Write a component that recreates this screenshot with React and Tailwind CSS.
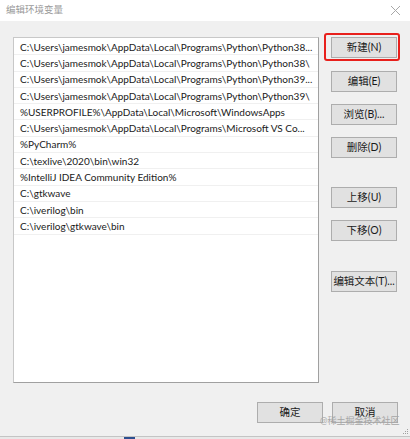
import React from "react";

const paths = [
  "C:\\Users\\jamesmok\\AppData\\Local\\Programs\\Python\\Python38...",
  "C:\\Users\\jamesmok\\AppData\\Local\\Programs\\Python\\Python38\\",
  "C:\\Users\\jamesmok\\AppData\\Local\\Programs\\Python\\Python39...",
  "C:\\Users\\jamesmok\\AppData\\Local\\Programs\\Python\\Python39\\",
  "%USERPROFILE%\\AppData\\Local\\Microsoft\\WindowsApps",
  "C:\\Users\\jamesmok\\AppData\\Local\\Programs\\Microsoft VS Co...",
  "%PyCharm%",
  "C:\\texlive\\2020\\bin\\win32",
  "%IntelliJ IDEA Community Edition%",
  "C:\\gtkwave",
  "C:\\iverilog\\bin",
  "C:\\iverilog\\gtkwave\\bin",
];

function Btn({ children, className = "" }) {
  return (
    <div
      className={`flex h-[21px] w-[66px] items-center justify-center border border-[#adadad] bg-[#e1e1e1] text-[10.5px] whitespace-nowrap text-[#1a1a1a] ${className}`}
    >
      {children}
    </div>
  );
}

export default function App() {
  return (
    <div
      className="relative flex h-[439px] w-[410px] flex-col overflow-hidden bg-[#f0f0f0]"
      style={{ fontFamily: 'Lato, "Noto Sans CJK SC", sans-serif' }}
    >
      {/* title bar */}
      <div className="flex h-[21px] shrink-0 items-center justify-between bg-white pl-[6px] pr-[9px]">
        <span className="text-[9.5px] text-[#9a9a9a]">编辑环境变量</span>
        <svg width="11" height="11" viewBox="0 0 11 11" className="text-[#a8a8a8]">
          <path d="M1 1L10 10M10 1L1 10" stroke="currentColor" strokeWidth="1" />
        </svg>
      </div>

      <div className="flex flex-1 flex-col">
        <div className="flex">
          {/* list */}
          <div className="ml-[13px] mt-[16px] h-[346px] w-[306px] border border-[#a0a0a0] border-l-[#c8c8c8] border-t-[#c8c8c8] bg-white pt-[1px]">
            {paths.map((p) => (
              <div
                key={p}
                className="flex h-[16.3px] items-center overflow-hidden border-b border-[#f0f0f0] pl-[6px] text-[10px] leading-none whitespace-nowrap text-[#1a1a1a]"
              >
                {p}
              </div>
            ))}
          </div>

          {/* buttons */}
          <div className="ml-[12px] mt-[16px] flex flex-col">
            <div className="relative">
              <div className="pointer-events-none absolute -top-[4px] -left-[7px] h-[28px] w-[76px] rounded-[3px] border-2 border-[#e8201c]" />
              <Btn>新建(N)</Btn>
            </div>
            <Btn className="mt-[13px]">编辑(E)</Btn>
            <Btn className="mt-[12px]">浏览(B)...</Btn>
            <Btn className="mt-[12px]">删除(D)</Btn>
            <Btn className="mt-[29px]">上移(U)</Btn>
            <Btn className="mt-[12px]">下移(O)</Btn>
            <Btn className="mt-[30px]">编辑文本(T)...</Btn>
          </div>
        </div>

        {/* bottom buttons */}
        <div className="mt-[19px] flex justify-end gap-[9px] pr-[12px]">
          <Btn>确定</Btn>
          <Btn>取消</Btn>
        </div>
      </div>

      {/* watermark */}
      <div className="pointer-events-none absolute top-[415px] left-[320px] text-[9px] leading-[12px] text-[#a6a6a6]">
        @稀土掘金技术社区
      </div>

      {/* resize grip */}
      <svg width="7" height="7" viewBox="0 0 7 7" className="absolute top-[428px] left-[402px]">
        <rect x="5" y="1" width="1" height="1" fill="#a0a0a0" />
        <rect x="3" y="3" width="1" height="1" fill="#a0a0a0" />
        <rect x="5" y="3" width="1" height="1" fill="#a0a0a0" />
        <rect x="1" y="5" width="1" height="1" fill="#a0a0a0" />
        <rect x="3" y="5" width="1" height="1" fill="#a0a0a0" />
        <rect x="5" y="5" width="1" height="1" fill="#a0a0a0" />
      </svg>

      {/* bottom edge strip */}
      <div className="flex h-[3px] shrink-0 border-t border-[#c4c4c4] bg-[#e8e8e8]">
        <div className="ml-[124px] w-[11px] bg-[#2c4f8f]" />
      </div>
    </div>
  );
}
